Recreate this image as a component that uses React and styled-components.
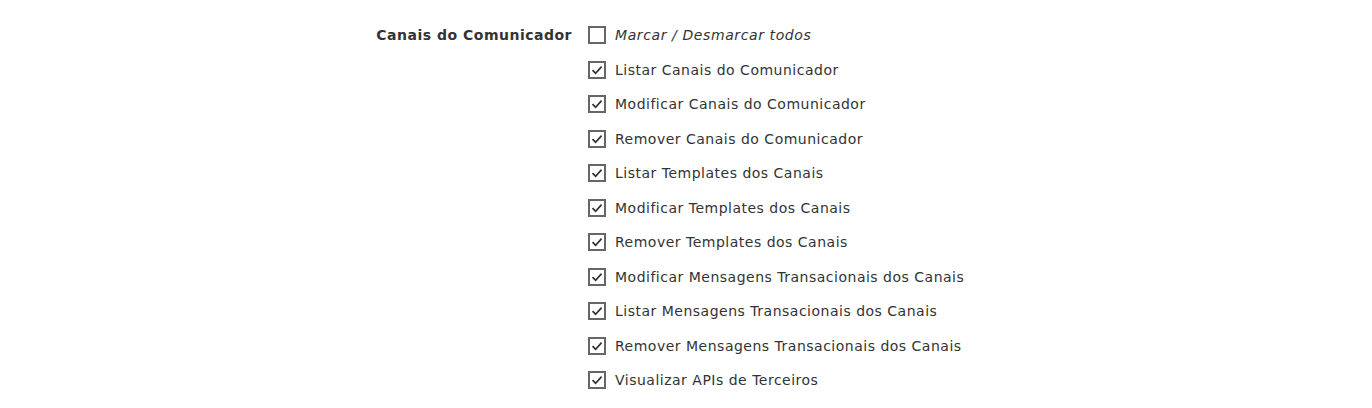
import styled, { createGlobalStyle } from "styled-components";

const GlobalStyle = createGlobalStyle`
  html, body {
    margin: 0;
    padding: 0;
    background: #fff;
  }
  body {
    font-family: "DejaVu Sans", Verdana, sans-serif;
    color: #333;
  }
`;

const options = [
  "Listar Canais do Comunicador",
  "Modificar Canais do Comunicador",
  "Remover Canais do Comunicador",
  "Listar Templates dos Canais",
  "Modificar Templates dos Canais",
  "Remover Templates dos Canais",
  "Modificar Mensagens Transacionais dos Canais",
  "Listar Mensagens Transacionais dos Canais",
  "Remover Mensagens Transacionais dos Canais",
  "Visualizar APIs de Terceiros",
];

export default function App() {
  return (
    <>
      <GlobalStyle />
      <Field>
        <Label>Canais do Comunicador</Label>
        <List>
          <Option>
            <Box />
            <Text italic>Marcar / Desmarcar todos</Text>
          </Option>
          {options.map((o) => (
            <Option key={o}>
              <Box checked>
                <svg width="14" height="14" viewBox="0 0 14 14">
                  <path d="M2.5 7.2 L5.6 10.2 L11.6 3.6" fill="none" stroke="#333" strokeWidth="1.7" />
                </svg>
              </Box>
              <Text>{o}</Text>
            </Option>
          ))}
        </List>
      </Field>
    </>
  );
}

const Field = styled.div`
  display: grid;
  grid-template-columns: 572px 1fr;
  column-gap: 16px;
  padding-top: 18px;
`;

const Label = styled.div`
  text-align: right;
  font-weight: bold;
  font-size: 14px;
  letter-spacing: 0.5px;
  line-height: 34.5px;
  color: #333;
`;

const List = styled.div`
  display: flex;
  flex-direction: column;
`;

const Option = styled.label`
  display: flex;
  align-items: center;
  gap: 9px;
  height: 34.5px;
`;

const Box = styled.span`
  box-sizing: border-box;
  width: 18px;
  height: 18px;
  border: 2px solid #666;
  background: #fff;
  display: flex;
  align-items: center;
  justify-content: center;
  flex-shrink: 0;
`;

const Text = styled.span`
  font-size: 14px;
  letter-spacing: ${(p) => (p.italic ? "0.6px" : "0.5px")};
  font-style: ${(p) => (p.italic ? "italic" : "normal")};
  color: #333;
`;
